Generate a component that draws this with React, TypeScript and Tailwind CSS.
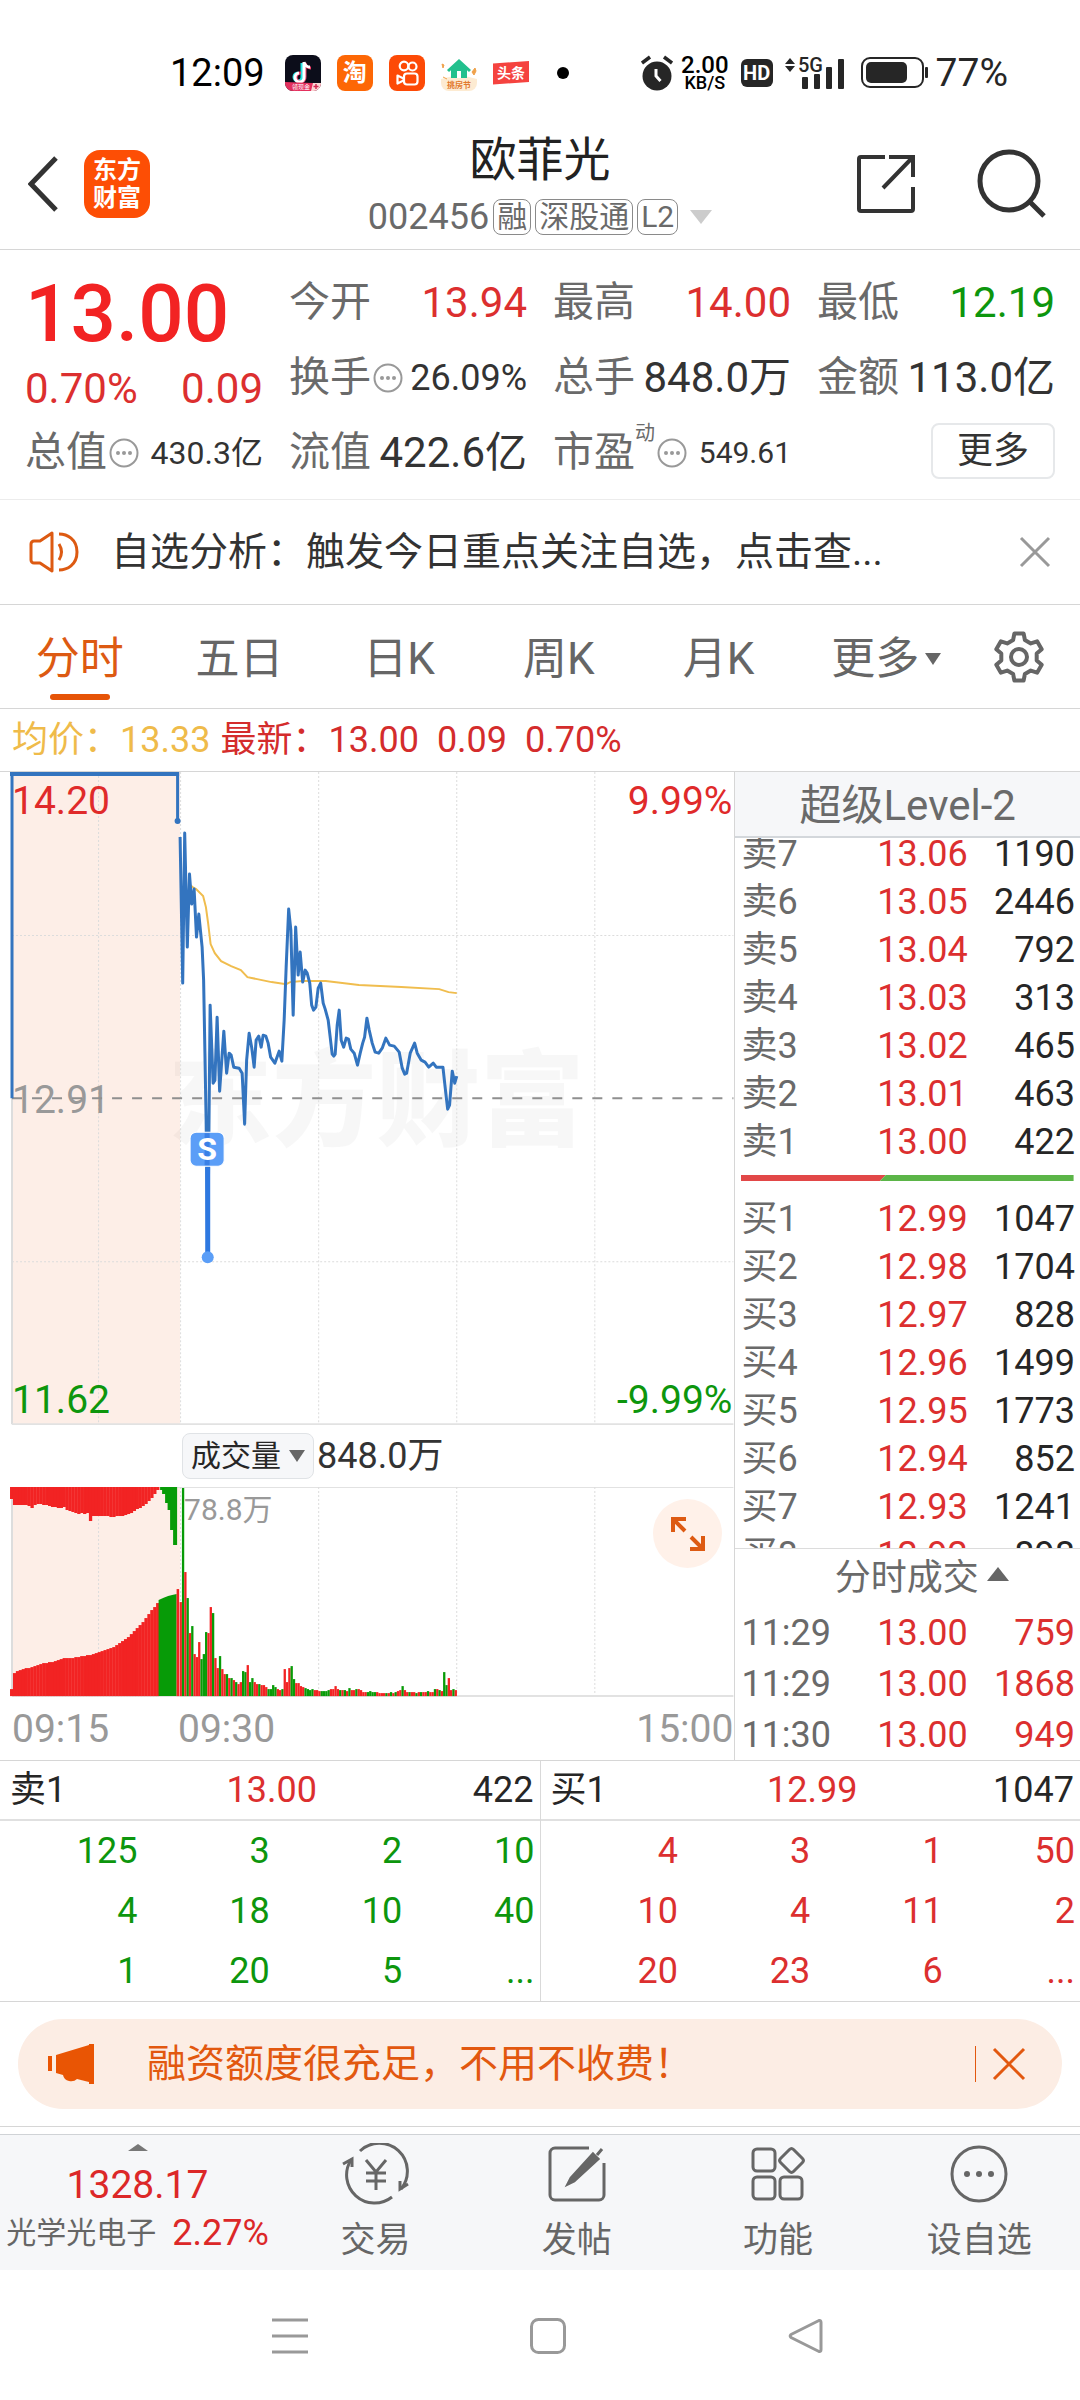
import type { ReactNode } from 'react'

type Tone = 'r' | 'g'

type Level = {
  label: string
  price: string
  volume: string
}

const sellLevels: Level[] = [
  { label: '卖7', price: '13.06', volume: '1190' },
  { label: '卖6', price: '13.05', volume: '2446' },
  { label: '卖5', price: '13.04', volume: '792' },
  { label: '卖4', price: '13.03', volume: '313' },
  { label: '卖3', price: '13.02', volume: '465' },
  { label: '卖2', price: '13.01', volume: '463' },
  { label: '卖1', price: '13.00', volume: '422' },
]

const buyLevels: Level[] = [
  { label: '买1', price: '12.99', volume: '1047' },
  { label: '买2', price: '12.98', volume: '1704' },
  { label: '买3', price: '12.97', volume: '828' },
  { label: '买4', price: '12.96', volume: '1499' },
  { label: '买5', price: '12.95', volume: '1773' },
  { label: '买6', price: '12.94', volume: '852' },
  { label: '买7', price: '12.93', volume: '1241' },
  { label: '买8', price: '12.92', volume: '898' },
]

const trades: Level[] = [
  { label: '11:29', price: '13.00', volume: '759' },
  { label: '11:29', price: '13.00', volume: '1868' },
  { label: '11:30', price: '13.00', volume: '949' },
]

const sellQueue = [
  ['125', '3', '2', '10'],
  ['4', '18', '10', '40'],
  ['1', '20', '5', '...'],
]

const buyQueue = [
  ['4', '3', '1', '50'],
  ['10', '4', '11', '2'],
  ['20', '23', '6', '...'],
]

const tabs = ['分时', '五日', '日K', '周K', '月K']

const pricePoints =
  '180,65 182.6,211 184.6,61 187.2,175 189.4,102 191.6,132 194,117 196.4,165 198.7,142 202,175 203.5,208 206,348 207.6,485 ' +
  '210,233 213,311 214.8,308 217,245 219.5,319 223.7,259 226.5,301 229,281 231,283 233.6,295 239,296 242,301 244.5,352 ' +
  '246.5,288 249,261 251.5,275 254,295 256,268 258.6,264 261,275 263,263 265.7,264 268,271 270.5,285 274.7,291 279,279 ' +
  '281.7,289 284,248 286,195 288.5,137 290.7,158 293,243 295.5,155 298,203 300,180 302.5,210 305,198 307,201 309.6,211 ' +
  '311.5,233 313.4,238 315.7,235 318,216 320.5,211 323,231 325,237 328,248 332,282 333.6,284 335,282 337,253 339,238 ' +
  '341,268 343.5,275 346,266 348.3,267 350.6,277 354,281 357.3,293 360,281 362.5,271 364.4,265 366.7,246 369,258 372,271 ' +
  '375,280 378.5,281 382,276 385.6,266 389.4,273 394,274 399,280 402,296 404.5,302 406.4,301 410,281 414.4,271 417,281 ' +
  '421,288 424.8,290 428.5,295 433,291 436,295 442.7,295 445,316 447.4,337 449.3,333 452,299 454.5,311 456.5,304'

const averagePoints =
  '190,113 192.5,115 196,117 203,124 205.8,135 208,151 210.5,172 214.7,181 221,189 231,194 240.7,198 247.3,205 257,207 ' +
  '271.4,210 286,212 290,210 302,209 325.6,209 358.7,213 401,215 439,217 448.3,220 456.5,221'

// one bar a minute from 09:30, height in chart units
const volumeBars =
  'r94 g208 r124 g98 r63 g70 r42 r39 r54 g37 g42 g64 r63 r89 g83 r38 r28 g40 r27 r22 g22 r18 g18 r16 g14 r12 r14 g25 g24 r31 ' +
  'g14 g18 r14 r12 g12 r11 r11 r9 g7 g7 g11 g9 r7 r6 g7 r27 r14 r28 g30 g17 r13 r13 r10 r9 g8 g7 g6 g7 r6 r6 ' +
  'r5 g5 g5 g5 g6 r7 r7 r10 r7 g6 r6 g6 r5 g8 r6 r6 g7 r7 r6 r4 r4 g4 g5 g4 g4 r4 r3 r3 r3 g3 ' +
  'r3 g4 r3 g4 r5 r6 g10 r6 r4 g4 r4 r4 g3 r4 g4 r4 r4 g5 r4 r4 g7 r7 g6 r5 g24 g11 r18 r6 g7 r6'

const auctionTop = [
  12, 18, 18, 18, 18, 18, 19, 21, 18, 17, 17, 18, 18, 19, 20, 20, 21, 21, 20, 23, 24, 25, 26, 27, 26, 27, 26, 34, 29, 29, 29, 29,
  29, 29, 30, 30, 29, 29, 29, 28, 27, 26, 24, 22, 21, 19, 17, 14, 11, 7, 3,
]

const auctionBottom = [
  7, 23, 25, 26, 27, 28, 28, 29, 30, 31, 32, 33, 33, 34, 34, 35, 36, 37, 38, 38, 38, 38, 39, 39, 40, 40, 41, 41, 42, 43, 44, 45,
  46, 47, 48, 49, 51, 53, 55, 57, 59, 62, 65, 68, 71, 74, 78, 82, 86, 89, 93,
]

const barFill: Record<Tone, string> = { r: '#f22323', g: '#079b07' }

const gearPath =
  Array.from({ length: 6 }, (_, tooth) => {
    const base = tooth * 60 - 90
    return [
      [-19, 18],
      [-11, 24],
      [11, 24],
      [19, 18],
    ]
      .map(([angle, radius]) => {
        const rad = ((base + angle) * Math.PI) / 180
        return `${(26 + radius * Math.cos(rad)).toFixed(1)} ${(26 + radius * Math.sin(rad)).toFixed(1)}`
      })
      .join('L')
  }).reduce((path, part) => (path ? `${path}L${part}` : `M${part}`), '') + 'Z'

function StatusBar() {
  return (
    <div className="flex items-center justify-between pt-10 pr-[72px] pl-[170px] text-black">
      <div className="flex h-[66px] items-center gap-4">
        <span className="mr-1 text-[38px] leading-none">12:09</span>
        <svg className="size-9" viewBox="0 0 36 36" aria-hidden>
          <rect width="36" height="36" rx="8" fill="#0c0d1a" />
          <path d="M17 8v14a4 4 0 1 1-4-4" fill="none" stroke="#27e5e5" strokeWidth="3" />
          <path d="M20 8c1 4 3 5 6 5M20 8v14a4.500 4.500 0 1 1-4-4" fill="none" stroke="#f2416b" strokeWidth="3" />
          <path d="M19 7c1 4 3 5 6 5M19 7v15a4.500 4.500 0 1 1-5-4" fill="none" stroke="#fff" strokeWidth="3" />
          <path d="M0 27l27 1 9 0a8 8 0 0 1-8 8H8a8 8 0 0 1-8-8z" fill="#e4305e" />
          <path d="M28 28h8a8 8 0 0 1-8 8h-2z" fill="#fbd9d6" />
          <text x="7" y="34" fontSize="6" fill="#fff">
            领现金
          </text>
          <path d="M31 29v5M28.500 31.500h5" stroke="#d02850" strokeWidth="1.500" />
        </svg>
        <span className="flex size-9 items-center justify-center rounded-lg bg-[#fd6705] text-2xl leading-none font-bold text-white">
          淘
        </span>
        <svg className="size-9" viewBox="0 0 36 36" aria-hidden>
          <rect width="36" height="36" rx="8" fill="#fd4a06" />
          <g fill="none" stroke="#fff" strokeWidth="2.200">
            <circle cx="15" cy="11" r="4.300" />
            <circle cx="23.500" cy="11.500" r="4" />
            <rect x="15" y="18.500" width="13.500" height="11" rx="3" />
            <path d="M8.500 20.500l6 3v2l-6 3z" strokeLinejoin="round" />
          </g>
        </svg>
        <svg className="size-9" viewBox="0 0 36 36" aria-hidden>
          <path d="M0 24q18-6 36 0v4a8 8 0 0 1-8 8H8a8 8 0 0 1-8-8z" fill="#fdebd2" />
          <path d="M7 16L18 6l11 10" fill="none" stroke="#22c08d" strokeWidth="3" />
          <path d="M10 14l8-7 8 7v9H10z" fill="#22c08d" />
          <path d="M16 16h4v7h-4z" fill="#fff" />
          <path d="M31 17l3-4 1 3-2 4zM1 9l2 1-1 3zM2 22l4 2" fill="#f0a14a" stroke="#f0a14a" />
          <text x="6" y="33" fontSize="8" fontWeight="700" fill="#e27a2e">
            挑房节
          </text>
        </svg>
        <svg className="size-9" viewBox="0 0 36 36" aria-hidden>
          <path d="M0 8.500L36 6v21L0 29.500z" fill="#f5433f" />
          <text x="4" y="23" fontSize="14" fontWeight="700" fill="#fff">
            头条
          </text>
        </svg>
        <span className="ml-3 size-3 rounded-full bg-black" />
      </div>
      <div className="flex h-[66px] items-center gap-3 text-[#262626]">
        <svg className="h-9 w-8" viewBox="0 0 32 36" aria-hidden>
          <circle cx="16" cy="21" r="14.500" fill="#262626" />
          <path d="M1 8l8-6M31 8l-8-6" stroke="#262626" strokeWidth="3.500" />
          <path d="M15 14v7l4.500 5" fill="none" stroke="#fff" strokeWidth="3" />
        </svg>
        <div className="-ml-1 text-center font-medium text-black">
          <div className="text-2xl leading-5">2.00</div>
          <div className="text-lg leading-4">KB/S</div>
        </div>
        <span className="flex h-7 w-8 items-center justify-center rounded-md bg-[#262626] text-xl leading-none font-bold text-white">
          HD
        </span>
        <svg className="h-9 w-[60px]" viewBox="0 0 60 36" aria-hidden>
          <path d="M0 9l5-6 5 6zM0 11l5 6 5-6z" fill="#262626" />
          <text x="13" y="17" fontSize="20" fontWeight="500" fill="#262626">
            5G
          </text>
          <g fill="#262626">
            <rect x="17" y="22" width="6" height="12" rx="1" />
            <rect x="29" y="19" width="6" height="15" rx="1" />
            <rect x="41" y="12" width="6" height="22" rx="1" />
            <rect x="53" y="4" width="6" height="30" rx="1" />
          </g>
        </svg>
        <svg className="ml-1 h-8 w-[67px]" viewBox="0 0 67 32" aria-hidden>
          <rect x="1" y="1" width="61" height="29" rx="8" fill="none" stroke="#262626" strokeWidth="2" />
          <rect x="5" y="5" width="41" height="21" rx="5" fill="#262626" />
          <rect x="64" y="10" width="3" height="11" rx="1" fill="#262626" />
        </svg>
        <span className="-ml-1 text-[39px] leading-none">77%</span>
      </div>
    </div>
  )
}

function Tag({ children }: { children: ReactNode }) {
  return (
    <span className="flex h-9 items-center rounded-lg border border-[#8a8a8a] px-[3px] text-[30px] leading-none text-[#6a6a6a]">
      {children}
    </span>
  )
}

function Header() {
  return (
    <header className="grid grid-cols-[1fr_auto_1fr] items-center border-b border-[#d6d6d6] pt-[26px] pb-[14px]">
      <div className="flex items-center gap-[26px] pl-7">
        <button type="button" aria-label="返回">
          <svg className="h-14 w-[30px]" viewBox="0 0 30 56" aria-hidden>
            <path d="M28 2L3 28l25 26" fill="none" stroke="#333" strokeWidth="5" />
          </svg>
        </button>
        <a
          href="#home"
          className="flex h-[68px] w-[66px] flex-col items-center justify-center rounded-2xl bg-[#fd4e05] text-2xl leading-7 font-bold text-white"
        >
          <span>东方</span>
          <span>财富</span>
        </a>
      </div>
      <div className="flex flex-col items-center">
        <h1 className="text-[47px] leading-[56px] text-[#222]">欧菲光</h1>
        <div className="mt-[11px] flex items-center gap-1">
          <span className="text-[36px] leading-9 text-[#6a6a6a]">002456</span>
          <Tag>融</Tag>
          <Tag>深股通</Tag>
          <Tag>L2</Tag>
          <svg className="ml-2 h-[14px] w-[22px]" viewBox="0 0 22 14" aria-hidden>
            <path d="M0 0h22L11 14z" fill="#ccc" />
          </svg>
        </div>
      </div>
      <div className="flex items-center justify-end gap-[61px] pr-[33px]">
        <button type="button" aria-label="分享">
          <svg className="size-[60px]" viewBox="0 0 60 60" fill="none" stroke="#333" strokeWidth="4" aria-hidden>
            <path d="M29 3H5a2 2 0 0 0-2 2v50a2 2 0 0 0 2 2h50a2 2 0 0 0 2-2V33M33 3h24v20M57 3L27 34" />
          </svg>
        </button>
        <button type="button" aria-label="搜索">
          <svg className="size-[70px]" viewBox="0 0 70 70" fill="none" stroke="#333" strokeWidth="5" aria-hidden>
            <circle cx="32" cy="32" r="29" />
            <path d="M53 53l14 14" />
          </svg>
        </button>
      </div>
    </header>
  )
}

function InfoDot() {
  return (
    <svg className="ml-[2px] h-[30px] w-[30px] shrink-0" viewBox="0 0 30 30" aria-hidden>
      <circle cx="15" cy="15" r="13.500" fill="none" stroke="#999" strokeWidth="2" />
      <g fill="#999">
        <circle cx="9" cy="15" r="2" />
        <circle cx="15" cy="15" r="2" />
        <circle cx="21" cy="15" r="2" />
      </g>
    </svg>
  )
}

function Quote({ label, info = false, sup, children }: { label: string; info?: boolean; sup?: string; children: ReactNode }) {
  return (
    <div className="flex h-[75px] items-center justify-between whitespace-nowrap">
      <dt className="flex items-center text-[41px] leading-none text-[#6a6a6a]">
        {label}
        {sup ? <sup className="-top-5 self-center text-xl">{sup}</sup> : null}
        {info ? <InfoDot /> : null}
      </dt>
      <dd className="leading-none">{children}</dd>
    </div>
  )
}

function QuotePanel() {
  return (
    <section className="border-b border-[#ececec] px-[25px] pt-[15px] pb-[9px]">
      <dl className="grid grid-cols-4 gap-x-[26px]">
        <div className="row-span-2">
          <dt className="text-[80px] leading-[98px] font-medium text-[#f22323]">13.00</dt>
          <dd className="flex justify-between text-[42px] leading-[52px] text-[#dc2f2f]">
            <span>0.70%</span>
            <span>0.09</span>
          </dd>
        </div>
        <Quote label="今开">
          <span className="text-[42px] text-[#dc2f2f]">13.94</span>
        </Quote>
        <Quote label="最高">
          <span className="text-[42px] text-[#dc2f2f]">14.00</span>
        </Quote>
        <Quote label="最低">
          <span className="text-[42px] text-[#0d960d]">12.19</span>
        </Quote>
        <Quote label="换手" info>
          <span className="text-[36px] text-[#333]">26.09%</span>
        </Quote>
        <Quote label="总手">
          <span className="text-[42px] text-[#333]">848.0万</span>
        </Quote>
        <Quote label="金额">
          <span className="text-[42px] text-[#333]">113.0亿</span>
        </Quote>
        <Quote label="总值" info>
          <span className="text-[32px] text-[#333]">430.3亿</span>
        </Quote>
        <Quote label="流值">
          <span className="text-[42px] text-[#333]">422.6亿</span>
        </Quote>
        <Quote label="市盈" sup="动" info>
          <span className="text-[30px] text-[#333]">549.61</span>
        </Quote>
        <div className="flex items-center justify-end pb-1">
          <button type="button" className="h-14 rounded-lg border-2 border-[#e6e8ea] px-6 text-[36px] leading-none text-[#333]">
            更多
          </button>
        </div>
      </dl>
    </section>
  )
}

function Notice() {
  return (
    <section className="flex h-[105px] items-center border-b border-[#d6d6d6] pr-[29px] pl-7">
      <svg className="h-11 w-[52px]" viewBox="0 0 52 44" fill="none" stroke="#dd5a12" strokeWidth="3" aria-hidden>
        <path d="M24 3L12 11H6a3 3 0 0 0-3 3v16a3 3 0 0 0 3 3h6l12 8z" strokeLinejoin="round" />
        <path d="M31 14q5 8 0 16M31 4c8 0 18 5 18 18s-10 18-18 18" />
      </svg>
      <p className="min-w-0 flex-1 truncate pr-10 pl-[31px] text-[39px] leading-[52px] text-[#333]">自选分析：触发今日重点关注自选，点击查...</p>
      <button type="button" aria-label="关闭">
        <svg className="size-8" viewBox="0 0 32 32" aria-hidden>
          <path d="M2 2l28 28M30 2L2 30" stroke="#999" strokeWidth="3" />
        </svg>
      </button>
    </section>
  )
}

function Tabs() {
  return (
    <nav className="flex h-[104px] border-b border-[#d6d6d6] text-[44px] leading-none text-[#666]">
      <div className="grid flex-1 grid-cols-6">
        {tabs.map((tab, index) => (
          <button
            key={tab}
            type="button"
            className={`relative flex items-center justify-center pt-1 ${index === 0 ? 'text-[#dd5a12]' : ''}`}
          >
            {tab}
            {index === 0 ? <span className="absolute bottom-2 h-[6px] w-[60px] rounded-full bg-[#e65407]" /> : null}
          </button>
        ))}
        <button type="button" className="flex items-center justify-center gap-[6px] pt-1 pl-4">
          更多
          <svg className="h-3 w-4 shrink-0" viewBox="0 0 16 12" aria-hidden>
            <path d="M0 0h16L8 12z" fill="#666" />
          </svg>
        </button>
      </div>
      <button type="button" aria-label="设置" className="flex w-[122px] items-center justify-center">
        <svg className="size-[52px]" viewBox="0 0 52 52" fill="none" stroke="#666" strokeWidth="4" strokeLinejoin="round" aria-hidden>
          <path d={gearPath} />
          <circle cx="26" cy="26" r="8" />
        </svg>
      </button>
    </nav>
  )
}

function PriceSummary() {
  return (
    <div className="flex h-[63px] items-center gap-[18px] border-b border-[#d6d6d6] pl-3 text-[36px] leading-none text-[#d42c2c]">
      <span className="-mr-2 text-[#efbb4a]">均价：13.33</span>
      <span>最新：13.00</span>
      <span>0.09</span>
      <span>0.70%</span>
    </div>
  )
}

function PriceChart() {
  return (
    <svg className="block w-full" viewBox="0 0 734 653" fontSize="39" role="img" aria-label="分时走势">
      <rect x="12" y="0" width="168" height="652" fill="#fdeee7" />
      <text x="168" y="366" fontSize="104" fontWeight="900" fill="#000" fillOpacity="0.03">
        东方财富
      </text>
      <g stroke="#dcdcdc" strokeDasharray="2 2">
        <path d="M98.500 0V652M180.500 0V652M318.500 0V652M456.500 0V652M594.500 0V652" />
        <path d="M12 163.500H733M12 489.500H733" />
      </g>
      <path d="M12 326V652" stroke="#ddd" strokeWidth="2" />
      <path d="M12 652H733" stroke="#e2e2e2" strokeWidth="2" />
      <text x="12" y="341" fill="#999">
        12.91
      </text>
      <path d="M12 326H733" stroke="#8f8f8f" strokeWidth="2" strokeDasharray="10 10" />
      <text x="12" y="42" fill="#e02a2a">
        14.20
      </text>
      <text x="732" y="42" fill="#e02a2a" textAnchor="end">
        9.99%
      </text>
      <text x="12" y="641" fill="#0d960d">
        11.62
      </text>
      <text x="732" y="641" fill="#0d960d" textAnchor="end">
        -9.99%
      </text>
      <polyline points={averagePoints} fill="none" stroke="#f0bd4e" strokeWidth="2" />
      <g fill="none" stroke="#3374bf" strokeLinejoin="round">
        <path d="M10 2H179" strokeWidth="4" />
        <path d="M12 0V326M177.500 0V49" strokeWidth="3" />
        <polyline points={pricePoints} strokeWidth="3" />
      </g>
      <circle cx="177.500" cy="49" r="3" fill="#3374bf" />
      <path d="M207.600 395V484" stroke="#2e78e0" strokeWidth="5" />
      <circle cx="207.600" cy="485" r="6" fill="#5b9ef7" />
      <rect x="190" y="360" width="34" height="34" rx="6" fill="#5b9ef7" stroke="#fff" />
      <path d="M207 361V393" stroke="#3a80e6" strokeWidth="5" />
      <text x="207" y="388" fontSize="32" fontWeight="700" fill="#fff" textAnchor="middle">
        S
      </text>
    </svg>
  )
}

function VolumeChart() {
  return (
    <div className="relative">
      <svg className="block w-full" viewBox="0 0 734 211" role="img" aria-label="成交量">
        <rect x="12" y="0" width="168" height="209" fill="#fdeee7" />
        <path d="M12 0.500H733" stroke="#e2e2e2" />
        <path d="M12 0V209" stroke="#ddd" strokeWidth="2" />
        <path d="M98.500 0V209M180.500 0V209M318.500 0V209M456.500 0V209M594.500 0V209" stroke="#dcdcdc" strokeDasharray="2 2" />
        <path d="M12 209H733" stroke="#e2e2e2" strokeWidth="2" />
        {auctionTop.map((height, index) => (
          <rect key={index} x={10 + index * 2.92} y="0" width="3.300" height={height} fill="#f22323" />
        ))}
        {auctionBottom.map((height, index) => (
          <rect key={index} x={10 + index * 2.92} y={209 - height} width="3.300" height={height} fill="#f22323" />
        ))}
        <path d="M160 0H177V58H173V43H170V23H167.500V16H165V7H162V3H160z" fill="#079b07" />
        <path d="M158.500 209V113L163 111L168 109L172 108L176.500 107V209z" fill="#079b07" />
        <path d="M176.500 102H179V209H176.500z" fill="#f22323" />
        {volumeBars.split(' ').map((bar, index) => {
          const height = Number(bar.slice(1))
          return (
            <rect
              key={index}
              x={179.5 + index * 2.31}
              y={209 - height}
              width="2.300"
              height={height}
              fill={barFill[bar[0] as Tone]}
            />
          )
        })}
        <text x="184" y="33" fontSize="30" fill="#999">
          78.8万
        </text>
      </svg>
      <button
        type="button"
        aria-label="全屏"
        className="absolute top-3 right-3 flex size-[69px] items-center justify-center rounded-full bg-[#fff1e9]"
      >
        <svg className="size-[34px]" viewBox="0 0 34 34" fill="none" stroke="#dd5a12" strokeWidth="4" aria-hidden>
          <path d="M2 15V2H15M2 2L14 14M19 32H32V19M32 32L20 20" />
        </svg>
      </button>
    </div>
  )
}

function LevelTable({ rows, rowClass, volumeClass }: { rows: Level[]; rowClass: string; volumeClass: string }) {
  return (
    <table className="w-full table-fixed text-[36px] leading-none">
      <tbody>
        {rows.map((row, index) => (
          <tr key={index} className={rowClass}>
            <th scope="row" className="w-[32%] p-0 pl-[6px] text-left font-normal text-[#6a6a6a]">
              {row.label}
            </th>
            <td className="w-[36%] p-0 pr-[2px] text-right text-[#dc2f2f]">{row.price}</td>
            <td className={`p-0 pr-[5px] text-right ${volumeClass}`}>{row.volume}</td>
          </tr>
        ))}
      </tbody>
    </table>
  )
}

function OrderBook() {
  return (
    <aside className="flex w-[32%] flex-col border-l border-[#d6d6d6]">
      <h2 className="flex h-[66px] items-center justify-center border-b-2 border-[#d3d7db] bg-[#f6f7f9] pt-1 text-[42px] leading-none text-[#6a6a6a]">
        超级Level-2
      </h2>
      <div className="min-h-0 grow basis-0 overflow-hidden">
        <div className="-mt-2">
          <LevelTable rows={sellLevels} rowClass="h-12" volumeClass="text-[#262626]" />
        </div>
        <svg className="mt-[9px] mb-[14px] block h-[6px] w-full px-[6px]" viewBox="0 0 333 6" preserveAspectRatio="none" aria-hidden>
          <path d="M0 0H145L139 6H0z" fill="#e24848" />
          <path d="M145 0H333V6H139z" fill="#5bb548" />
        </svg>
        <LevelTable rows={buyLevels} rowClass="h-12" volumeClass="text-[#262626]" />
      </div>
      <div className="border-t border-[#dcdcdc]">
        <button type="button" className="flex h-[58px] w-full items-center justify-center gap-2 pl-7 text-[36px] leading-none text-[#6a6a6a]">
          分时成交
          <svg className="mb-2 h-[14px] w-[22px]" viewBox="0 0 22 14" aria-hidden>
            <path d="M11 0L22 14H0z" fill="#666" />
          </svg>
        </button>
        <LevelTable rows={trades} rowClass="h-[51px]" volumeClass="text-[#dc2f2f]" />
      </div>
    </aside>
  )
}

function ChartPanel() {
  return (
    <div className="flex min-w-0 flex-1 flex-col">
      <PriceChart />
      <div className="flex h-[62px] items-center gap-[3px] pl-[182px] leading-none">
        <button
          type="button"
          className="flex h-[46px] items-center gap-2 rounded-lg border border-[#e0e3e6] bg-[#f6f7f9] px-2 text-[30px] text-[#262626]"
        >
          成交量
          <svg className="h-3 w-4" viewBox="0 0 16 12" aria-hidden>
            <path d="M0 0h16L8 12z" fill="#666" />
          </svg>
        </button>
        <span className="text-[36px] text-[#333]">848.0万</span>
      </div>
      <VolumeChart />
      <div className="flex h-[62px] items-center pr-px pl-3 text-[39px] leading-none text-[#999]">
        <span className="w-[166px]">09:15</span>
        <span>09:30</span>
        <span className="ml-auto">15:00</span>
      </div>
    </div>
  )
}

function Queue({ level, rows, numberClass }: { level: Level; rows: string[][]; numberClass: string }) {
  return (
    <section className="flex-1 text-[36px] leading-none">
      <div className="grid h-[60px] grid-cols-3 items-center border-b-2 border-[#e0e0e0] pr-[6px] pl-[10px] text-[#262626]">
        <span>{level.label}</span>
        <span className="text-center text-[#dc2f2f]">{level.price}</span>
        <span className="text-right">{level.volume}</span>
      </div>
      <div className="px-[5px]">
        <table className={`w-full table-fixed ${numberClass}`}>
          <tbody>
            {rows.map((row, index) => (
              <tr key={index} className="h-[60px]">
                {row.map((cell, column) => (
                  <td key={column} className="p-0 text-right">
                    {cell}
                  </td>
                ))}
              </tr>
            ))}
          </tbody>
        </table>
      </div>
    </section>
  )
}

function Banner() {
  return (
    <div className="mx-[18px] mt-[17px] mb-[17px] flex h-[90px] items-center rounded-full bg-[#fcede4] pr-9 pl-[30px] text-[#e2580f]">
      <svg className="h-10 w-[46px]" viewBox="0 0 46 40" fill="#e95504" aria-hidden>
        <path d="M0 12h4v15H0zM8 11L41 1V0h5v40h-5v-2l-12-3q-3 3-8 2t-6-6l-7-2z" />
      </svg>
      <p className="flex-1 pl-[53px] text-[39px] leading-[52px]">融资额度很充足，不用不收费！</p>
      <span className="mr-4 h-9 w-px bg-[#e2580f]" />
      <button type="button" aria-label="关闭">
        <svg className="size-[34px]" viewBox="0 0 34 34" aria-hidden>
          <path d="M2 2l30 30M32 2L2 32" stroke="#e2580f" strokeWidth="3" />
        </svg>
      </button>
    </div>
  )
}

function NavItem({ label, children }: { label: string; children: ReactNode }) {
  return (
    <a href="#nav" className="flex flex-1 flex-col items-center pt-2 text-[35px] leading-[52px]">
      <svg className="h-[62px] w-[68px]" viewBox="0 0 68 62" fill="none" stroke="#666" strokeWidth="3" aria-hidden>
        {children}
      </svg>
      <span className="mt-[10px]">{label}</span>
    </a>
  )
}

function BottomNav() {
  return (
    <nav className="flex h-[136px] border-t border-[#d0d3d6] bg-[#f6f7f9] text-[#666]">
      <a href="#sector" className="flex w-[275px] flex-col items-center whitespace-nowrap">
        <svg className="mt-[9px] h-[7px] w-5" viewBox="0 0 20 7" aria-hidden>
          <path d="M10 0L20 7H0z" fill="#777" />
        </svg>
        <span className="mt-3 text-[39px] leading-[44px] text-[#dc2828]">1328.17</span>
        <span className="mt-1 flex items-center gap-4 text-[30px] leading-[44px]">
          光学光电子
          <span className="text-[36px] text-[#dc2828]">2.27%</span>
        </span>
      </a>
      <NavItem label="交易">
        <path d="M18 8A28 28 0 0 1 59 46M50 54A28 28 0 0 1 9 17" />
        <path d="M1 21l9-5v8M66 41l-8 5v-8" />
        <path d="M24 17l10 12 10-12M24 30h20M24 38h20M34 29v18" />
      </NavItem>
      <NavItem label="发帖">
        <path d="M46 5H12a5 5 0 0 0-5 5v42a5 5 0 0 0 5 5h44a5 5 0 0 0 5-5V20" />
        <path d="M54 12l5-6M50 11l5 5-24 22-6 3 3-6z" fill="#666" />
      </NavItem>
      <NavItem label="功能">
        <rect x="9" y="6" width="22" height="22" rx="4" />
        <rect x="9" y="34" width="22" height="22" rx="4" />
        <rect x="36" y="34" width="22" height="22" rx="4" />
        <path d="M45.500 6.500q2-2 4 0l9 9q2 2 0 4l-9 9q-2 2-4 0l-9-9q-2-2 0-4z" />
      </NavItem>
      <NavItem label="设自选">
        <circle cx="34" cy="31" r="27" />
        <g fill="#666" stroke="none">
          <circle cx="22" cy="31" r="3" />
          <circle cx="34" cy="31" r="3" />
          <circle cx="46" cy="31" r="3" />
        </g>
      </NavItem>
    </nav>
  )
}

function SystemNav() {
  return (
    <div className="flex h-[132px] items-center justify-center gap-[222px] pl-4">
      <button type="button" aria-label="最近任务">
        <svg className="size-9" viewBox="0 0 36 36" stroke="#999" strokeWidth="3" aria-hidden>
          <path d="M0 2H36M0 18H36M0 34H36" />
        </svg>
      </button>
      <button type="button" aria-label="主屏幕">
        <svg className="size-9" viewBox="0 0 36 36" fill="none" stroke="#999" strokeWidth="3" aria-hidden>
          <rect x="1.500" y="1.500" width="33" height="33" rx="7" />
        </svg>
      </button>
      <button type="button" aria-label="返回上级">
        <svg className="size-9" viewBox="0 0 36 36" fill="none" stroke="#999" strokeWidth="3" strokeLinejoin="round" aria-hidden>
          <path d="M31 2.500L3 16.500q-1.500 1.500 0 3L31 33.500q2 0.500 2-2V4.500q0-2.500-2-2z" />
        </svg>
      </button>
    </div>
  )
}

export default function App() {
  return (
    <main className="min-h-screen bg-white font-['Roboto','Noto_Sans_CJK_SC',sans-serif]" lang="zh-CN">
      <StatusBar />
      <Header />
      <QuotePanel />
      <Notice />
      <Tabs />
      <PriceSummary />
      <div className="flex border-b border-[#d6d6d6]">
        <ChartPanel />
        <OrderBook />
      </div>
      <div className="flex divide-x divide-[#d9d9d9] border-b border-[#d6d6d6]">
        <Queue level={sellLevels[6]} rows={sellQueue} numberClass="text-[#0d960d]" />
        <Queue level={buyLevels[0]} rows={buyQueue} numberClass="text-[#dc2f2f]" />
      </div>
      <Banner />
      <div className="h-2 border-t border-[#d6d6d6]" />
      <BottomNav />
      <SystemNav />
    </main>
  )
}
